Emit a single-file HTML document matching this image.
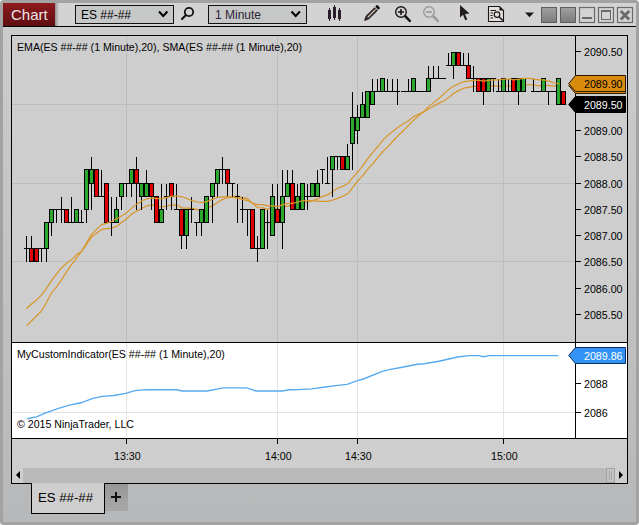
<!DOCTYPE html>
<html><head><meta charset="utf-8"><style>
*{margin:0;padding:0;box-sizing:border-box}
body{width:639px;height:525px;overflow:hidden;position:relative;background:#f4f4f4;font-family:"Liberation Sans",sans-serif;}
.a{position:absolute}
.pl{position:absolute;left:584px;font-size:10.67px;line-height:12px;color:#000;white-space:nowrap}
.tk{position:absolute;left:576px;width:5px;height:1px;background:#000}
.txt{position:absolute;font-size:10.6px;line-height:12px;color:#000;white-space:nowrap}
</style></head><body>
<!-- outer frame -->
<div class="a" style="left:0;top:0;width:639px;height:525px;border:3px solid #a2a2a2;border-radius:4px;background:#b9babb"></div>
<!-- toolbar -->
<div class="a" style="left:3px;top:3px;width:633px;height:23px;background:#d3d3d3"></div>
<div class="a" style="left:3px;top:26px;width:633px;height:1px;background:#000"></div>
<!-- chart window bg -->
<div class="a" style="left:3px;top:27px;width:633px;height:495px;background:linear-gradient(#cbcccc,#b7b8b9)"></div>
<!-- red Chart tab -->
<div class="a" style="left:3px;top:3px;width:52px;height:23px;background:linear-gradient(#8e1a1d,#5e0f12)"></div>
<div class="a" style="left:55px;top:3px;width:4px;height:23px;background:linear-gradient(90deg,#909090,#d3d3d3)"></div>
<div class="a" style="left:11px;top:6px;font-size:15px;line-height:18px;color:#efe6ea">Chart</div>
<!-- dropdowns -->
<div class="a" style="left:75px;top:5px;width:99px;height:19px;border:1px solid #111;background:#c6c7c7"></div>
<div class="a" style="left:81px;top:8px;font-size:12px;line-height:14px;color:#000">ES ##-##</div>
<div class="a" style="left:208px;top:5px;width:99px;height:19px;border:1px solid #111;background:#c6c7c7"></div>
<div class="a" style="left:215px;top:8px;font-size:12px;line-height:14px;color:#2a2535">1 Minute</div>
<svg class="a" style="left:0;top:0" width="639" height="27">
<path d="M159 11.5 L163.2 16 L167.4 11.5" fill="none" stroke="#000" stroke-width="2"/>
<path d="M291.5 11.5 L295.7 16 L299.9 11.5" fill="none" stroke="#000" stroke-width="2"/>
<!-- search -->
<circle cx="189" cy="12" r="4.2" fill="none" stroke="#111" stroke-width="1.8"/>
<path d="M186 15 L182 19" stroke="#111" stroke-width="2.2" stroke-linecap="round"/>
<!-- candles icon -->
<g fill="#2a1c2a">
<rect x="329" y="8" width="1" height="13"/><rect x="328" y="10" width="3" height="9"/>
<rect x="334" y="5" width="1" height="15"/><rect x="333" y="7" width="3" height="11"/>
<rect x="339" y="8" width="1" height="13"/><rect x="338" y="10" width="3" height="9"/>
</g>
<!-- pencil -->
<g transform="translate(372,13) rotate(-45)">
<rect x="-7" y="-2.3" width="13" height="4.6" fill="#2a2026"/>
<rect x="-6" y="-0.6" width="11" height="1.2" fill="#d8c8b0"/>
<rect x="6.5" y="-2.3" width="3" height="4.6" rx="1" fill="#1a1418"/>
<rect x="5.8" y="-2.3" width="0.9" height="4.6" fill="#c8c0c0"/>
<path d="M-7 -2.3 L-11.2 0 L-7 2.3 Z" fill="#2a2026"/>
</g>
<!-- zoom in -->
<circle cx="401" cy="12" r="5.3" fill="none" stroke="#1a1418" stroke-width="1.4"/>
<path d="M398 12 H404 M401 9 V15" stroke="#1a1418" stroke-width="1.6"/>
<path d="M405.5 16.5 L409.8 20.8" stroke="#1a1418" stroke-width="2.6" stroke-linecap="round"/>
<!-- zoom out -->
<circle cx="429" cy="12" r="5.3" fill="none" stroke="#9a9a9a" stroke-width="1.4"/>
<path d="M426 12 H432" stroke="#9a9a9a" stroke-width="1.6"/>
<path d="M433.5 16.5 L437.8 20.8" stroke="#9a9a9a" stroke-width="2.6" stroke-linecap="round"/>
<!-- cursor -->
<path d="M460 5 L460 17.5 L463 14.8 L465.3 20.3 L467.3 19.4 L465 14 L469.5 13.5 Z" fill="#201c20"/>
<!-- data box -->
<path d="M488.5 6.5 H499.5 L503.5 10.5 V21.5 H488.5 Z" fill="#e4e0dc" stroke="#1a1418" stroke-width="1.1"/>
<path d="M499.5 6.5 L503.5 10.5 H499.5 Z" fill="#1a1418"/>
<path d="M490.5 10.5 H496 M490.5 13 H493 M490.5 15.5 H492.5 M490.5 18 H493" stroke="#1a1418" stroke-width="1"/>
<circle cx="497" cy="14.6" r="2.8" fill="none" stroke="#1a1418" stroke-width="1.2"/>
<path d="M499 16.7 L502.8 20.6" stroke="#1a1418" stroke-width="1.5"/>
<!-- dropdown arrow -->
<path d="M525 12.5 H534 L529.5 17.3 Z" fill="#1a1a1a"/>
<!-- gray squares -->
<defs><linearGradient id="gs" x1="0" y1="0" x2="0" y2="1"><stop offset="0" stop-color="#a0a0a0"/><stop offset="1" stop-color="#7c7c7c"/></linearGradient></defs>
<rect x="541.5" y="7.5" width="15" height="15" fill="url(#gs)" stroke="#5e5e5e" stroke-width="1"/>
<rect x="560.5" y="7.5" width="15" height="15" fill="url(#gs)" stroke="#5e5e5e" stroke-width="1"/>
<!-- min / max / close -->
<rect x="579.5" y="7.5" width="15" height="15" fill="none" stroke="#6a6a6a" stroke-width="1.2"/>
<rect x="582" y="17" width="10" height="2" fill="#6a6a6a"/>
<rect x="598.5" y="7.5" width="15" height="15" fill="none" stroke="#6a6a6a" stroke-width="1.2"/>
<rect x="601.5" y="10.5" width="9" height="9" fill="none" stroke="#6a6a6a" stroke-width="1"/>
<rect x="601" y="10" width="10" height="2" fill="#6a6a6a"/>
<rect x="617.5" y="7.5" width="15" height="15" fill="none" stroke="#6a6a6a" stroke-width="1.2"/>
<path d="M620.8 11 L629.2 19.4 M629.2 11 L620.8 19.4" stroke="#6a6a6a" stroke-width="2.8"/>
</svg>

<!-- chart panel border -->
<div class="a" style="left:11px;top:35px;width:617px;height:449px;border:1px solid #000;background:#cecece"></div>
<!-- price plot -->
<div class="a" style="left:12px;top:36px;width:615px;height:306px;background:#cecece"></div>
<div class="a" style="left:575px;top:36px;width:1px;height:306px;background:#000"></div>
<div class="a" style="left:12px;top:342px;width:615px;height:1px;background:#000"></div>
<!-- indicator panel -->
<div class="a" style="left:12px;top:343px;width:615px;height:95px;background:#fff"></div>
<div class="a" style="left:575px;top:343px;width:1px;height:95px;background:#000"></div>
<div class="a" style="left:12px;top:438px;width:615px;height:1px;background:#000"></div>
<!-- time axis -->
<div class="a" style="left:12px;top:439px;width:615px;height:29px;background:#cecece"></div>
<!-- scrollbar -->
<div class="a" style="left:12px;top:468px;width:615px;height:15px;background:#b9b9b9"></div>
<div class="a" style="left:12px;top:468px;width:11px;height:15px;background:#cfcfcf"></div>
<div class="a" style="left:615px;top:468px;width:12px;height:15px;background:#cfcfcf"></div>

<svg class="a" style="left:0;top:0" width="639" height="525">
<g shape-rendering="crispEdges">
<!-- grid price -->
<rect x="12" y="104" width="563" height="1" fill="#bdbdbd"/>
<rect x="12" y="183" width="563" height="1" fill="#bdbdbd"/>
<rect x="12" y="261" width="563" height="1" fill="#bdbdbd"/>
<rect x="126" y="36" width="1" height="306" fill="#bdbdbd"/>
<rect x="277" y="36" width="1" height="306" fill="#bdbdbd"/>
<rect x="357" y="36" width="1" height="306" fill="#bdbdbd"/>
<rect x="503" y="36" width="1" height="306" fill="#bdbdbd"/>
<!-- grid indicator -->
<rect x="12" y="412" width="563" height="1" fill="#e4e4e4"/>
<rect x="126" y="343" width="1" height="95" fill="#e4e4e4"/>
<rect x="277" y="343" width="1" height="95" fill="#e4e4e4"/>
<rect x="357" y="343" width="1" height="95" fill="#e4e4e4"/>
<rect x="503" y="343" width="1" height="95" fill="#e4e4e4"/>
<!-- time ticks -->
<rect x="126" y="439" width="1" height="5" fill="#000"/>
<rect x="277" y="439" width="1" height="5" fill="#000"/>
<rect x="357" y="439" width="1" height="5" fill="#000"/>
<rect x="503" y="439" width="1" height="5" fill="#000"/>
<!-- ind ticks -->
<rect x="576" y="383" width="5" height="1" fill="#000"/>
<rect x="576" y="412" width="5" height="1" fill="#000"/>
</g>

<polyline fill="none" stroke="#d8962a" stroke-width="1.2" stroke-linejoin="round" points="26.5,308.5 31.5,304.0 36.5,300.0 41.5,295.1 46.6,288.1 51.6,280.6 56.6,273.8 61.6,267.7 66.7,263.3 71.7,259.4 76.7,254.6 81.7,251.5 86.8,243.8 91.8,236.7 96.8,232.9 101.8,229.4 106.9,228.7 111.9,228.1 116.9,226.3 121.9,222.2 127.0,218.4 132.0,213.8 137.0,210.9 142.1,208.2 147.1,205.8 152.1,204.9 157.1,206.6 162.2,206.8 167.2,205.8 172.2,204.9 177.2,205.3 182.3,208.1 187.3,208.2 192.3,208.3 197.3,209.6 202.4,209.6 207.4,208.3 212.4,205.9 217.4,202.5 222.5,199.4 227.5,197.8 232.5,196.4 237.5,196.4 242.6,197.6 247.6,198.7 252.6,203.4 257.7,207.7 262.7,207.9 267.7,209.2 272.7,208.0 277.8,209.3 282.8,208.1 287.8,205.7 292.8,206.0 297.9,205.1 302.9,203.0 307.9,202.3 312.9,200.5 318.0,198.8 323.0,196.1 328.0,194.8 333.0,191.2 338.1,187.9 343.1,186.2 348.1,183.4 353.1,177.2 358.2,171.5 363.2,165.1 368.2,158.1 373.2,151.8 378.3,146.0 383.3,139.6 388.3,135.0 393.4,130.9 398.4,127.1 403.4,123.7 408.4,120.7 413.5,116.6 418.5,114.3 423.5,112.1 428.5,108.9 433.6,106.0 438.6,103.4 443.6,101.0 448.6,97.6 453.7,93.3 458.7,90.6 463.7,88.2 468.7,87.3 473.8,86.4 478.8,86.9 483.8,87.4 488.8,86.5 493.9,85.7 498.9,86.3 503.9,85.5 509.0,86.1 514.0,86.6 519.0,85.9 524.0,85.1 529.1,84.5 534.1,85.2 539.1,85.8 544.1,85.1 549.2,85.7 554.2,86.2 559.2,85.5"/>
<g shape-rendering="crispEdges">
<rect x="26" y="236" width="1" height="26" fill="#000"/>
<rect x="24" y="248" width="5" height="1" fill="#000"/>
<rect x="31" y="236" width="1" height="26" fill="#000"/>
<rect x="29" y="248" width="5" height="14" fill="#000"/>
<rect x="30" y="249" width="3" height="12" fill="#e00000"/>
<rect x="36" y="249" width="1" height="13" fill="#000"/>
<rect x="34" y="248" width="5" height="14" fill="#000"/>
<rect x="35" y="249" width="3" height="12" fill="#e00000"/>
<rect x="41" y="249" width="1" height="13" fill="#000"/>
<rect x="39" y="248" width="5" height="1" fill="#000"/>
<rect x="46" y="223" width="1" height="39" fill="#000"/>
<rect x="44" y="222" width="5" height="27" fill="#000"/>
<rect x="45" y="223" width="3" height="25" fill="#2ca82c"/>
<rect x="51" y="210" width="1" height="26" fill="#000"/>
<rect x="49" y="209" width="5" height="14" fill="#000"/>
<rect x="50" y="210" width="3" height="12" fill="#2ca82c"/>
<rect x="56" y="210" width="1" height="13" fill="#000"/>
<rect x="54" y="209" width="5" height="1" fill="#000"/>
<rect x="61" y="197" width="1" height="26" fill="#000"/>
<rect x="59" y="209" width="5" height="1" fill="#000"/>
<rect x="66" y="210" width="1" height="13" fill="#000"/>
<rect x="64" y="209" width="5" height="14" fill="#000"/>
<rect x="65" y="210" width="3" height="12" fill="#e00000"/>
<rect x="71" y="197" width="1" height="26" fill="#000"/>
<rect x="69" y="222" width="5" height="1" fill="#000"/>
<rect x="76" y="210" width="1" height="13" fill="#000"/>
<rect x="74" y="209" width="5" height="14" fill="#000"/>
<rect x="75" y="210" width="3" height="12" fill="#2ca82c"/>
<rect x="81" y="210" width="1" height="13" fill="#000"/>
<rect x="79" y="222" width="5" height="1" fill="#000"/>
<rect x="86" y="170" width="1" height="53" fill="#000"/>
<rect x="84" y="169" width="5" height="41" fill="#000"/>
<rect x="85" y="170" width="3" height="39" fill="#2ca82c"/>
<rect x="91" y="157" width="1" height="53" fill="#000"/>
<rect x="89" y="169" width="5" height="15" fill="#000"/>
<rect x="90" y="170" width="3" height="13" fill="#2ca82c"/>
<rect x="96" y="170" width="1" height="27" fill="#000"/>
<rect x="94" y="169" width="5" height="28" fill="#000"/>
<rect x="95" y="170" width="3" height="26" fill="#e00000"/>
<rect x="101" y="170" width="1" height="27" fill="#000"/>
<rect x="99" y="196" width="5" height="1" fill="#000"/>
<rect x="106" y="184" width="1" height="39" fill="#000"/>
<rect x="104" y="183" width="5" height="40" fill="#000"/>
<rect x="105" y="184" width="3" height="38" fill="#e00000"/>
<rect x="111" y="197" width="1" height="39" fill="#000"/>
<rect x="109" y="222" width="5" height="1" fill="#000"/>
<rect x="116" y="197" width="1" height="26" fill="#000"/>
<rect x="114" y="209" width="5" height="14" fill="#000"/>
<rect x="115" y="210" width="3" height="12" fill="#2ca82c"/>
<rect x="121" y="184" width="1" height="26" fill="#000"/>
<rect x="119" y="183" width="5" height="14" fill="#000"/>
<rect x="120" y="184" width="3" height="12" fill="#2ca82c"/>
<rect x="126" y="184" width="1" height="13" fill="#000"/>
<rect x="124" y="183" width="5" height="1" fill="#000"/>
<rect x="131" y="170" width="1" height="27" fill="#000"/>
<rect x="129" y="169" width="5" height="15" fill="#000"/>
<rect x="130" y="170" width="3" height="13" fill="#2ca82c"/>
<rect x="136" y="157" width="1" height="53" fill="#000"/>
<rect x="134" y="169" width="5" height="15" fill="#000"/>
<rect x="135" y="170" width="3" height="13" fill="#e00000"/>
<rect x="141" y="184" width="1" height="26" fill="#000"/>
<rect x="139" y="183" width="5" height="14" fill="#000"/>
<rect x="140" y="184" width="3" height="12" fill="#2ca82c"/>
<rect x="146" y="170" width="1" height="27" fill="#000"/>
<rect x="144" y="183" width="5" height="14" fill="#000"/>
<rect x="145" y="184" width="3" height="12" fill="#2ca82c"/>
<rect x="151" y="184" width="1" height="26" fill="#000"/>
<rect x="149" y="183" width="5" height="14" fill="#000"/>
<rect x="150" y="184" width="3" height="12" fill="#e00000"/>
<rect x="156" y="197" width="1" height="26" fill="#000"/>
<rect x="154" y="196" width="5" height="27" fill="#000"/>
<rect x="155" y="197" width="3" height="25" fill="#e00000"/>
<rect x="161" y="184" width="1" height="39" fill="#000"/>
<rect x="159" y="209" width="5" height="14" fill="#000"/>
<rect x="160" y="210" width="3" height="12" fill="#2ca82c"/>
<rect x="166" y="184" width="1" height="26" fill="#000"/>
<rect x="164" y="196" width="5" height="1" fill="#000"/>
<rect x="171" y="184" width="1" height="26" fill="#000"/>
<rect x="169" y="183" width="5" height="14" fill="#000"/>
<rect x="170" y="184" width="3" height="12" fill="#e00000"/>
<rect x="176" y="184" width="1" height="26" fill="#000"/>
<rect x="174" y="209" width="5" height="1" fill="#000"/>
<rect x="181" y="210" width="1" height="39" fill="#000"/>
<rect x="179" y="209" width="5" height="27" fill="#000"/>
<rect x="180" y="210" width="3" height="25" fill="#e00000"/>
<rect x="186" y="210" width="1" height="39" fill="#000"/>
<rect x="184" y="209" width="5" height="27" fill="#000"/>
<rect x="185" y="210" width="3" height="25" fill="#2ca82c"/>
<rect x="191" y="197" width="1" height="26" fill="#000"/>
<rect x="189" y="209" width="5" height="1" fill="#000"/>
<rect x="196" y="223" width="1" height="13" fill="#000"/>
<rect x="194" y="222" width="5" height="1" fill="#000"/>
<rect x="201" y="210" width="1" height="26" fill="#000"/>
<rect x="199" y="209" width="5" height="14" fill="#000"/>
<rect x="200" y="210" width="3" height="12" fill="#2ca82c"/>
<rect x="206" y="197" width="1" height="26" fill="#000"/>
<rect x="204" y="196" width="5" height="27" fill="#000"/>
<rect x="205" y="197" width="3" height="25" fill="#2ca82c"/>
<rect x="212" y="184" width="1" height="39" fill="#000"/>
<rect x="210" y="183" width="5" height="14" fill="#000"/>
<rect x="211" y="184" width="3" height="12" fill="#2ca82c"/>
<rect x="217" y="170" width="1" height="27" fill="#000"/>
<rect x="215" y="169" width="5" height="15" fill="#000"/>
<rect x="216" y="170" width="3" height="13" fill="#2ca82c"/>
<rect x="222" y="157" width="1" height="27" fill="#000"/>
<rect x="220" y="169" width="5" height="1" fill="#000"/>
<rect x="227" y="170" width="1" height="27" fill="#000"/>
<rect x="225" y="169" width="5" height="15" fill="#000"/>
<rect x="226" y="170" width="3" height="13" fill="#e00000"/>
<rect x="232" y="184" width="1" height="13" fill="#000"/>
<rect x="230" y="183" width="5" height="1" fill="#000"/>
<rect x="237" y="184" width="1" height="39" fill="#000"/>
<rect x="235" y="196" width="5" height="1" fill="#000"/>
<rect x="242" y="197" width="1" height="26" fill="#000"/>
<rect x="240" y="209" width="5" height="1" fill="#000"/>
<rect x="247" y="210" width="1" height="26" fill="#000"/>
<rect x="245" y="209" width="5" height="1" fill="#000"/>
<rect x="252" y="210" width="1" height="39" fill="#000"/>
<rect x="250" y="209" width="5" height="40" fill="#000"/>
<rect x="251" y="210" width="3" height="38" fill="#e00000"/>
<rect x="257" y="236" width="1" height="26" fill="#000"/>
<rect x="255" y="248" width="5" height="1" fill="#000"/>
<rect x="262" y="210" width="1" height="39" fill="#000"/>
<rect x="260" y="209" width="5" height="40" fill="#000"/>
<rect x="261" y="210" width="3" height="38" fill="#2ca82c"/>
<rect x="267" y="210" width="1" height="39" fill="#000"/>
<rect x="265" y="222" width="5" height="1" fill="#000"/>
<rect x="272" y="184" width="1" height="52" fill="#000"/>
<rect x="270" y="196" width="5" height="40" fill="#000"/>
<rect x="271" y="197" width="3" height="38" fill="#2ca82c"/>
<rect x="277" y="184" width="1" height="39" fill="#000"/>
<rect x="275" y="209" width="5" height="14" fill="#000"/>
<rect x="276" y="210" width="3" height="12" fill="#e00000"/>
<rect x="282" y="170" width="1" height="79" fill="#000"/>
<rect x="280" y="196" width="5" height="27" fill="#000"/>
<rect x="281" y="197" width="3" height="25" fill="#2ca82c"/>
<rect x="287" y="170" width="1" height="27" fill="#000"/>
<rect x="285" y="183" width="5" height="14" fill="#000"/>
<rect x="286" y="184" width="3" height="12" fill="#2ca82c"/>
<rect x="292" y="170" width="1" height="40" fill="#000"/>
<rect x="290" y="183" width="5" height="27" fill="#000"/>
<rect x="291" y="184" width="3" height="25" fill="#e00000"/>
<rect x="297" y="184" width="1" height="26" fill="#000"/>
<rect x="295" y="196" width="5" height="14" fill="#000"/>
<rect x="296" y="197" width="3" height="12" fill="#2ca82c"/>
<rect x="302" y="184" width="1" height="26" fill="#000"/>
<rect x="300" y="183" width="5" height="27" fill="#000"/>
<rect x="301" y="184" width="3" height="25" fill="#2ca82c"/>
<rect x="307" y="184" width="1" height="26" fill="#000"/>
<rect x="305" y="196" width="5" height="1" fill="#000"/>
<rect x="312" y="184" width="1" height="13" fill="#000"/>
<rect x="310" y="183" width="5" height="14" fill="#000"/>
<rect x="311" y="184" width="3" height="12" fill="#2ca82c"/>
<rect x="317" y="170" width="1" height="27" fill="#000"/>
<rect x="315" y="183" width="5" height="14" fill="#000"/>
<rect x="316" y="184" width="3" height="12" fill="#2ca82c"/>
<rect x="322" y="170" width="1" height="14" fill="#000"/>
<rect x="320" y="169" width="5" height="1" fill="#000"/>
<rect x="327" y="157" width="1" height="27" fill="#000"/>
<rect x="325" y="183" width="5" height="1" fill="#000"/>
<rect x="332" y="157" width="1" height="40" fill="#000"/>
<rect x="330" y="156" width="5" height="14" fill="#000"/>
<rect x="331" y="157" width="3" height="12" fill="#2ca82c"/>
<rect x="337" y="157" width="1" height="13" fill="#000"/>
<rect x="335" y="156" width="5" height="1" fill="#000"/>
<rect x="342" y="157" width="1" height="13" fill="#000"/>
<rect x="340" y="156" width="5" height="14" fill="#000"/>
<rect x="341" y="157" width="3" height="12" fill="#e00000"/>
<rect x="347" y="144" width="1" height="26" fill="#000"/>
<rect x="345" y="156" width="5" height="14" fill="#000"/>
<rect x="346" y="157" width="3" height="12" fill="#2ca82c"/>
<rect x="352" y="92" width="1" height="78" fill="#000"/>
<rect x="350" y="117" width="5" height="27" fill="#000"/>
<rect x="351" y="118" width="3" height="25" fill="#2ca82c"/>
<rect x="357" y="105" width="1" height="39" fill="#000"/>
<rect x="355" y="117" width="5" height="14" fill="#000"/>
<rect x="356" y="118" width="3" height="12" fill="#2ca82c"/>
<rect x="362" y="92" width="1" height="26" fill="#000"/>
<rect x="360" y="104" width="5" height="14" fill="#000"/>
<rect x="361" y="105" width="3" height="12" fill="#2ca82c"/>
<rect x="367" y="92" width="1" height="26" fill="#000"/>
<rect x="365" y="91" width="5" height="27" fill="#000"/>
<rect x="366" y="92" width="3" height="25" fill="#2ca82c"/>
<rect x="372" y="79" width="1" height="26" fill="#000"/>
<rect x="370" y="91" width="5" height="14" fill="#000"/>
<rect x="371" y="92" width="3" height="12" fill="#2ca82c"/>
<rect x="377" y="79" width="1" height="13" fill="#000"/>
<rect x="375" y="91" width="5" height="1" fill="#000"/>
<rect x="382" y="79" width="1" height="13" fill="#000"/>
<rect x="380" y="78" width="5" height="14" fill="#000"/>
<rect x="381" y="79" width="3" height="12" fill="#2ca82c"/>
<rect x="387" y="79" width="1" height="13" fill="#000"/>
<rect x="385" y="91" width="5" height="1" fill="#000"/>
<rect x="392" y="79" width="1" height="13" fill="#000"/>
<rect x="390" y="91" width="5" height="1" fill="#000"/>
<rect x="397" y="79" width="1" height="26" fill="#000"/>
<rect x="395" y="91" width="5" height="1" fill="#000"/>
<rect x="401" y="91" width="5" height="1" fill="#000"/>
<rect x="408" y="79" width="1" height="13" fill="#000"/>
<rect x="406" y="91" width="5" height="1" fill="#000"/>
<rect x="413" y="79" width="1" height="13" fill="#000"/>
<rect x="411" y="78" width="5" height="14" fill="#000"/>
<rect x="412" y="79" width="3" height="12" fill="#2ca82c"/>
<rect x="416" y="91" width="5" height="1" fill="#000"/>
<rect x="421" y="91" width="5" height="1" fill="#000"/>
<rect x="428" y="66" width="1" height="26" fill="#000"/>
<rect x="426" y="78" width="5" height="14" fill="#000"/>
<rect x="427" y="79" width="3" height="12" fill="#2ca82c"/>
<rect x="433" y="66" width="1" height="13" fill="#000"/>
<rect x="431" y="78" width="5" height="1" fill="#000"/>
<rect x="438" y="66" width="1" height="13" fill="#000"/>
<rect x="436" y="78" width="5" height="1" fill="#000"/>
<rect x="441" y="78" width="5" height="1" fill="#000"/>
<rect x="448" y="53" width="1" height="13" fill="#000"/>
<rect x="446" y="65" width="5" height="1" fill="#000"/>
<rect x="453" y="53" width="1" height="26" fill="#000"/>
<rect x="451" y="52" width="5" height="14" fill="#000"/>
<rect x="452" y="53" width="3" height="12" fill="#2ca82c"/>
<rect x="458" y="53" width="1" height="13" fill="#000"/>
<rect x="456" y="52" width="5" height="14" fill="#000"/>
<rect x="457" y="53" width="3" height="12" fill="#e00000"/>
<rect x="463" y="53" width="1" height="13" fill="#000"/>
<rect x="461" y="65" width="5" height="1" fill="#000"/>
<rect x="468" y="53" width="1" height="26" fill="#000"/>
<rect x="466" y="65" width="5" height="14" fill="#000"/>
<rect x="467" y="66" width="3" height="12" fill="#e00000"/>
<rect x="473" y="66" width="1" height="26" fill="#000"/>
<rect x="471" y="78" width="5" height="1" fill="#000"/>
<rect x="478" y="79" width="1" height="13" fill="#000"/>
<rect x="476" y="78" width="5" height="14" fill="#000"/>
<rect x="477" y="79" width="3" height="12" fill="#e00000"/>
<rect x="483" y="79" width="1" height="26" fill="#000"/>
<rect x="481" y="78" width="5" height="14" fill="#000"/>
<rect x="482" y="79" width="3" height="12" fill="#e00000"/>
<rect x="488" y="79" width="1" height="13" fill="#000"/>
<rect x="486" y="78" width="5" height="14" fill="#000"/>
<rect x="487" y="79" width="3" height="12" fill="#2ca82c"/>
<rect x="493" y="79" width="1" height="13" fill="#000"/>
<rect x="491" y="78" width="5" height="1" fill="#000"/>
<rect x="498" y="79" width="1" height="13" fill="#000"/>
<rect x="496" y="91" width="5" height="1" fill="#000"/>
<rect x="503" y="79" width="1" height="13" fill="#000"/>
<rect x="501" y="78" width="5" height="14" fill="#000"/>
<rect x="502" y="79" width="3" height="12" fill="#2ca82c"/>
<rect x="508" y="79" width="1" height="13" fill="#000"/>
<rect x="506" y="91" width="5" height="1" fill="#000"/>
<rect x="513" y="79" width="1" height="13" fill="#000"/>
<rect x="511" y="78" width="5" height="14" fill="#000"/>
<rect x="512" y="79" width="3" height="12" fill="#e00000"/>
<rect x="518" y="79" width="1" height="26" fill="#000"/>
<rect x="516" y="78" width="5" height="14" fill="#000"/>
<rect x="517" y="79" width="3" height="12" fill="#2ca82c"/>
<rect x="523" y="79" width="1" height="13" fill="#000"/>
<rect x="521" y="78" width="5" height="14" fill="#000"/>
<rect x="522" y="79" width="3" height="12" fill="#2ca82c"/>
<rect x="526" y="78" width="5" height="1" fill="#000"/>
<rect x="533" y="79" width="1" height="13" fill="#000"/>
<rect x="531" y="91" width="5" height="1" fill="#000"/>
<rect x="536" y="91" width="5" height="1" fill="#000"/>
<rect x="543" y="79" width="1" height="13" fill="#000"/>
<rect x="541" y="78" width="5" height="14" fill="#000"/>
<rect x="542" y="79" width="3" height="12" fill="#2ca82c"/>
<rect x="548" y="92" width="1" height="13" fill="#000"/>
<rect x="546" y="91" width="5" height="1" fill="#000"/>
<rect x="551" y="91" width="5" height="1" fill="#000"/>
<rect x="558" y="79" width="1" height="26" fill="#000"/>
<rect x="556" y="78" width="5" height="27" fill="#000"/>
<rect x="557" y="79" width="3" height="25" fill="#2ca82c"/>
<rect x="563" y="92" width="1" height="13" fill="#000"/>
<rect x="561" y="91" width="5" height="14" fill="#000"/>
<rect x="562" y="92" width="3" height="12" fill="#e00000"/>
</g>
<polyline fill="none" stroke="#d8962a" stroke-width="1.2" stroke-linejoin="round" points="26.5,325.9 31.5,321.0 36.5,316.0 41.5,311.0 46.6,302.2 51.6,292.7 56.6,286.9 61.6,279.6 66.7,271.7 71.7,264.3 76.7,257.8 81.7,251.0 86.8,242.4 91.8,234.1 96.8,229.1 101.8,224.6 106.9,223.1 111.9,221.3 116.9,218.5 121.9,215.7 127.0,212.4 132.0,207.9 137.0,203.9 142.1,200.7 147.1,198.7 152.1,198.1 157.1,198.7 162.2,198.7 167.2,197.4 172.2,196.1 177.2,196.1 182.3,196.8 187.3,198.7 192.3,200.7 197.3,202.0 202.4,202.6 207.4,201.3 212.4,199.4 217.4,197.4 222.5,196.8 227.5,196.8 232.5,197.4 237.5,198.1 242.6,199.4 247.6,200.7 252.6,203.3 257.7,204.6 262.7,204.6 267.7,205.9 272.7,205.9 277.8,206.6 282.8,204.6 287.8,203.3 292.8,203.3 297.9,202.0 302.9,200.7 307.9,200.7 312.9,200.7 318.0,201.3 323.0,201.3 328.0,201.3 333.0,200.0 338.1,198.1 343.1,196.1 348.1,193.5 353.1,186.9 358.2,180.4 363.2,175.2 368.2,168.6 373.2,163.4 378.3,156.9 383.3,151.0 388.3,146.4 393.4,140.5 398.4,135.3 403.4,130.7 408.4,125.5 413.5,120.3 418.5,115.7 423.5,111.8 428.5,106.6 433.6,102.6 438.6,98.7 443.6,94.1 448.6,89.6 453.7,86.3 458.7,83.7 463.7,81.7 468.7,81.1 473.8,80.4 478.8,80.4 483.8,81.1 488.8,80.4 493.9,79.8 498.9,79.8 503.9,79.1 509.0,79.1 514.0,79.8 519.0,79.1 524.0,78.4 529.1,78.4 534.1,79.1 539.1,79.8 544.1,79.8 549.2,81.1 554.2,83.0 559.2,83.7"/>

<polyline fill="none" stroke="#58aaf0" stroke-width="1.4" points="27.0,418.7 36.4,416.9 45.8,412.9 57.6,408.6 69.3,405.1 81.0,402.8 92.8,398.3 102.2,396.4 113.9,395.5 125.6,393.4 135.0,390.6 146.8,389.6 176.4,389.8 182.3,391.0 207.0,391.0 223.4,387.9 246.9,387.9 256.2,391.0 282.1,391.0 289.1,389.8 298.5,389.6 311.7,388.9 323.5,387.3 337.6,385.4 347.0,384.4 357.5,380.7 363.4,379.0 382.2,371.3 389.2,369.6 400.9,367.5 417.4,364.2 424.4,363.8 440.0,361.0 458.8,356.7 469.3,355.6 478.7,355.6 483.4,356.7 489.3,355.6 558.5,355.6"/>
<!-- price markers -->
<path d="M568.7 85.5 L575.5 77.5 H625.5 V93.5 H575.5 Z" fill="#d98b0c" stroke="#2a1a04" stroke-width="1"/>
<path d="M568.7 83.5 L575.5 75.5 H625.5 V91.5 H575.5 Z" fill="#d98b0c" stroke="#2a1a04" stroke-width="1"/>
<path d="M568.7 104.5 L575.5 96.5 H625.5 V112.5 H575.5 Z" fill="#000" stroke="#000" stroke-width="1"/>
<path d="M568.7 355.5 L575.5 347.5 H625.5 V363.5 H575.5 Z" fill="#3393f5" stroke="#0b2f66" stroke-width="1"/>
</svg>

<div class="txt" style="left:17px;top:41px">EMA(ES ##-## (1 Minute),20), SMA(ES ##-## (1 Minute),20)</div>
<div class="txt" style="left:17px;top:348px">MyCustomIndicator(ES ##-## (1 Minute),20)</div>
<div class="txt" style="left:17px;top:418px">© 2015 NinjaTrader, LLC</div>
<div class="pl" style="top:46px">2090.50</div><div class="tk" style="top:51px"></div>
<div class="pl" style="top:125px">2089.00</div><div class="tk" style="top:130px"></div>
<div class="pl" style="top:151px">2088.50</div><div class="tk" style="top:156px"></div>
<div class="pl" style="top:178px">2088.00</div><div class="tk" style="top:183px"></div>
<div class="pl" style="top:204px">2087.50</div><div class="tk" style="top:209px"></div>
<div class="pl" style="top:230px">2087.00</div><div class="tk" style="top:235px"></div>
<div class="pl" style="top:256px">2086.50</div><div class="tk" style="top:261px"></div>
<div class="pl" style="top:283px">2086.00</div><div class="tk" style="top:288px"></div>
<div class="pl" style="top:309px">2085.50</div><div class="tk" style="top:314px"></div>

<div class="pl" style="top:78px">2089.90</div>
<div class="pl" style="top:99px;color:#fff">2089.50</div>
<div class="pl" style="top:350px;color:#fff">2089.86</div>
<div class="pl" style="top:378px">2088</div>
<div class="pl" style="top:407px">2086</div>

<div class="txt" style="left:114px;top:450px;font-size:10.67px">13:30</div>
<div class="txt" style="left:265px;top:450px;font-size:10.67px">14:00</div>
<div class="txt" style="left:345px;top:450px;font-size:10.67px">14:30</div>
<div class="txt" style="left:491px;top:450px;font-size:10.67px">15:00</div>

<!-- tab area -->
<div class="a" style="left:31px;top:483px;width:74px;height:31px;background:#cfcfcf;border:1px solid #000;border-top:none"></div>
<div class="a" style="left:38px;top:490px;font-size:13.2px;line-height:16px;color:#000">ES ##-##</div>
<div class="a" style="left:105px;top:484px;width:23px;height:27px;background:linear-gradient(#979797,#a9a9a9)"></div>
<div class="a" style="left:111px;top:496px;width:10px;height:2px;background:#111"></div>
<div class="a" style="left:115px;top:492px;width:2px;height:10px;background:#111"></div>
<svg class="a" style="left:0;top:460px" width="639" height="30">
<path d="M16 15 L20 11 V19 Z" fill="#000"/>
<path d="M623 15 L619 11 V19 Z" fill="#000"/>
<rect x="606.5" y="8.5" width="8" height="14" fill="#c4c4c4" stroke="#a0a0a0" stroke-width="1"/>
<rect x="609" y="11" width="1" height="9" fill="#a8a8a8"/>
<rect x="611" y="11" width="1" height="9" fill="#a8a8a8"/>
</svg>
</body></html>
